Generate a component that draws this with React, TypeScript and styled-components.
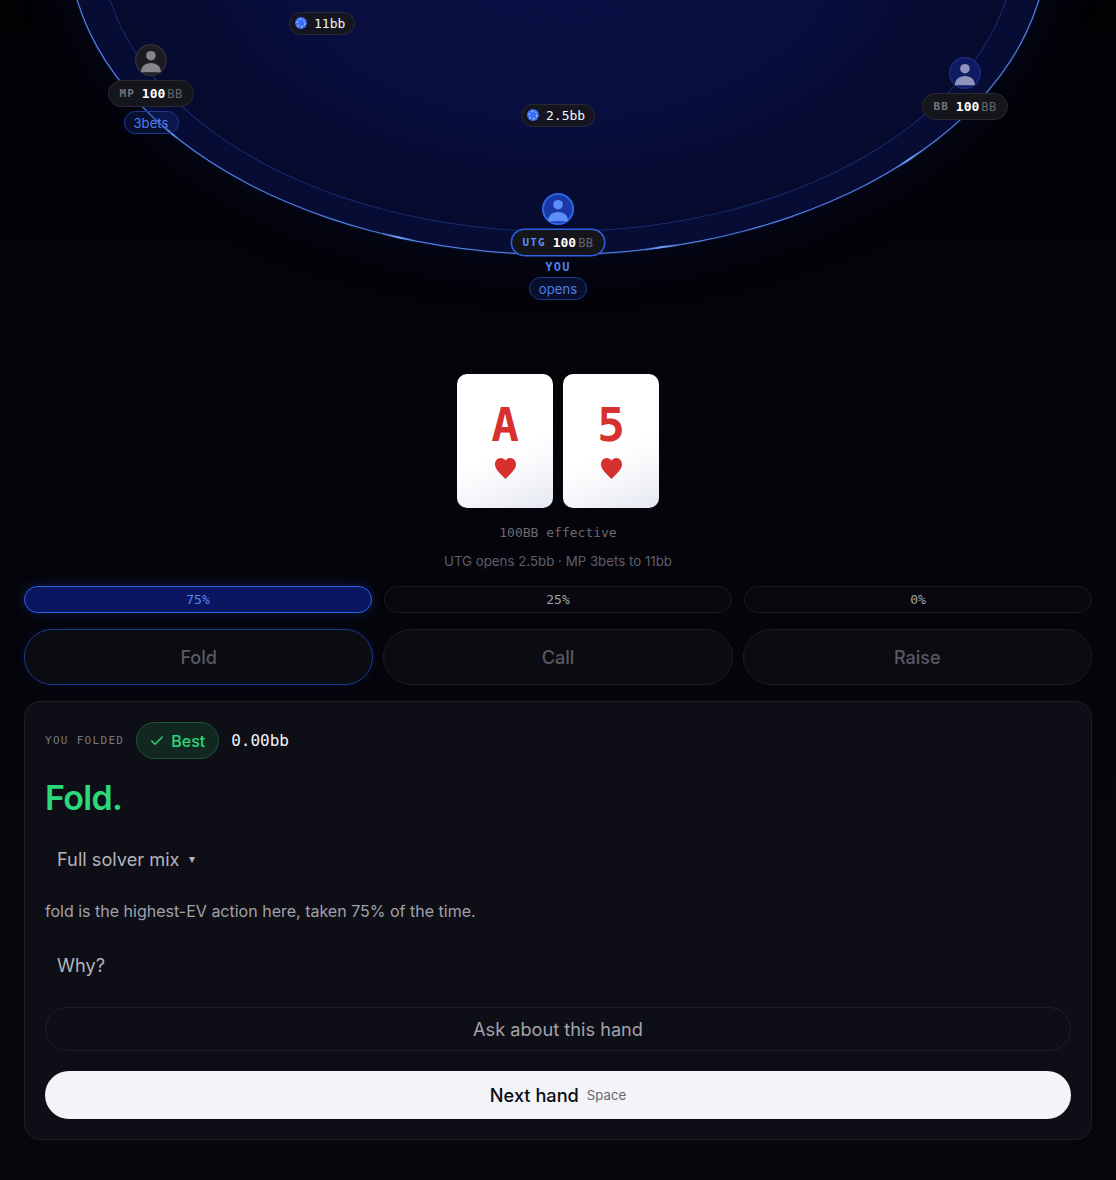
import styled, { createGlobalStyle } from "styled-components";
import { Check } from "lucide-react";

const mono = `"DejaVu Sans Mono", "Liberation Mono", monospace`;

const GlobalStyle = createGlobalStyle`
  html, body {
    margin: 0;
    padding: 0;
    background: #04040a;
    color: #f3f4f8;
    font-family: Inter, "Noto Sans", sans-serif;
  }
  button { font-family: inherit; }
`;

const Page = styled.div`
  height: 1180px;
  overflow: hidden;
  padding: 0 24px;
  box-sizing: border-box;
  background: linear-gradient(180deg, #020205 0%, #04040a 40%, #06060d 100%);
`;

const Stage = styled.div`
  position: relative;
  height: 374px;
  margin: 0 -24px;
  overflow: hidden;
`;

const Felt = styled.div`
  position: absolute;
  left: 68px;
  top: -373px;
  width: 980px;
  height: 628px;
  box-sizing: border-box;
  border-radius: 50%;
  border: 1px solid #5585ee;
  background: #060c34;
  box-shadow: 0 0 1.5px rgba(80, 130, 240, 0.7), 0 0 56px 8px rgba(20, 50, 170, 0.13);
`;

const FeltLine = styled.div`
  position: absolute;
  inset: 22px 31px;
  border-radius: 50%;
  border: 1px solid rgba(50, 90, 200, 0.42);
  background: radial-gradient(ellipse 50% 50% at 50% 50%, #0a1044 0%, #080e3e 60%, #060b30 90%, #060b2e 100%);
`;

const RimGlow = styled.svg`
  position: absolute;
  left: 0;
  top: 0;
  pointer-events: none;
  filter: blur(0.3px);
`;

const Seat = styled.div<{ $x: number; $y: number }>`
  position: absolute;
  left: ${(p) => p.$x}px;
  top: ${(p) => p.$y}px;
  transform: translateX(-50%);
  display: flex;
  flex-direction: column;
  align-items: center;
  gap: 4px;
`;

const Avatar = styled.div<{ $tone: "hero" | "navy" | "dark" }>`
  width: 32px;
  height: 32px;
  border-radius: 50%;
  box-shadow: inset 0 0 0 ${(p) => (p.$tone === "hero" ? "2px #2f63e6" : p.$tone === "navy" ? "1.5px #1c2a78" : "1.5px #2e2e36")};
  background: ${(p) => (p.$tone === "hero" ? "#1a38a6" : p.$tone === "navy" ? "#0f1a62" : "#1b1b21")};
  color: ${(p) => (p.$tone === "hero" ? "#5e8ff8" : p.$tone === "navy" ? "#8f94bb" : "#85858c")};
`;

const StackPill = styled.div<{ $hero?: boolean }>`
  height: 27px;
  box-sizing: border-box;
  padding: 0 10.5px;
  border-radius: 14px;
  display: flex;
  align-items: center;
  white-space: nowrap;
  font-family: ${mono};
  background: #15151c;
  border: 1px solid ${(p) => (p.$hero ? "#2f63e6" : "#2a2a32")};
  box-shadow: ${(p) => (p.$hero ? "0 0 0 0.5px #2f63e6" : "none")};
`;

const SeatName = styled.span<{ $hero?: boolean }>`
  font-size: 11px;
  font-weight: 700;
  letter-spacing: 1.1px;
  margin-right: 7px;
  color: ${(p) => (p.$hero ? "#5b8af0" : "#74747c")};
`;

const StackValue = styled.span`
  font-size: 13px;
  font-weight: 700;
  color: #ffffff;
`;

const StackUnit = styled.span`
  font-size: 12px;
  letter-spacing: 0.4px;
  margin-left: 2px;
  color: #66666e;
`;

const YouLabel = styled.div`
  font-family: ${mono};
  font-size: 12px;
  font-weight: 700;
  letter-spacing: 1.2px;
  line-height: 14px;
  color: #4f7fe8;
`;

const ActionTag = styled.div<{ $tight?: boolean }>`
  height: 23px;
  box-sizing: border-box;
  padding: 0 9px;
  margin-top: ${(p) => (p.$tight ? "-1px" : "0")};
  border-radius: 12px;
  display: flex;
  align-items: center;
  font-size: 13px;
  letter-spacing: 0.1px;
  color: #4f7fe8;
  background: rgba(30, 60, 170, 0.22);
  border: 1px solid #1d3a90;
`;

const BetPill = styled.div<{ $x: number; $y: number }>`
  position: absolute;
  left: ${(p) => p.$x}px;
  top: ${(p) => p.$y}px;
  height: 23px;
  box-sizing: border-box;
  padding: 0 9px 0 5px;
  border-radius: 12px;
  display: flex;
  align-items: center;
  gap: 7px;
  font-family: ${mono};
  font-size: 13px;
  font-weight: 500;
  color: #f3f4f8;
  background: #15151f;
  border: 1px solid #2a2a34;
`;

const Hand = styled.div`
  display: flex;
  justify-content: center;
  gap: 10px;
`;

const Card = styled.div`
  width: 96px;
  height: 134px;
  border-radius: 10px;
  display: flex;
  flex-direction: column;
  align-items: center;
  padding-top: 28px;
  box-sizing: border-box;
  color: #d6302f;
  background: linear-gradient(158deg, #ffffff 55%, #f6f7fa 75%, #e4e8f1 100%);
`;

const Rank = styled.div`
  font-family: ${mono};
  font-size: 46px;
  font-weight: 700;
  line-height: 46px;
`;

const Suit = styled.svg`
  width: 21px;
  height: 21px;
  margin-top: 10px;
`;

const Effective = styled.div`
  margin-top: 17px;
  text-align: center;
  font-family: ${mono};
  font-size: 13px;
  line-height: 16px;
  color: #6b6b73;
`;

const Story = styled.div`
  margin-top: 11px;
  text-align: center;
  font-size: 13.3px;
  line-height: 18px;
  color: #5f5f67;
`;

const FreqRow = styled.div`
  margin-top: 16px;
  display: grid;
  grid-template-columns: repeat(3, 1fr);
  gap: 12px;
`;

const FreqBar = styled.div<{ $best?: boolean }>`
  height: 27px;
  box-sizing: border-box;
  border-radius: 14px;
  display: flex;
  align-items: center;
  justify-content: center;
  font-family: ${mono};
  font-size: 13px;
  border: 1px solid ${(p) => (p.$best ? "#2f63e6" : "#1b1b22")};
  background: ${(p) => (p.$best ? "#0a1660" : "#08080e")};
  color: ${(p) => (p.$best ? "#5585ee" : "#a2a2aa")};
  box-shadow: ${(p) => (p.$best ? "0 0 12px rgba(40, 90, 230, 0.3)" : "none")};
`;

const ActionRow = styled.div`
  margin-top: 16px;
  display: grid;
  grid-template-columns: repeat(3, 1fr);
  gap: 10px;
`;

const ActionButton = styled.button<{ $best?: boolean }>`
  height: 56px;
  border-radius: 28px;
  font-size: 18px;
  font-weight: 500;
  color: #5a5a62;
  background: #0b0b12;
  border: 1px solid ${(p) => (p.$best ? "#1c3a92" : "#1c1c23")};
  box-shadow: ${(p) => (p.$best ? "0 0 10px rgba(30, 70, 200, 0.14)" : "none")};
`;

const Panel = styled.section`
  margin-top: 16px;
  height: 439px;
  box-sizing: border-box;
  padding: 20px;
  border-radius: 16px;
  background: #0e0e16;
  border: 1px solid #1f1f27;
  display: flex;
  flex-direction: column;
`;

const ResultRow = styled.div`
  display: flex;
  align-items: center;
  gap: 12px;
`;

const Eyebrow = styled.span`
  font-family: ${mono};
  font-size: 11px;
  letter-spacing: 1.3px;
  color: #77777f;
`;

const Badge = styled.span`
  height: 37px;
  box-sizing: border-box;
  padding: 0 13px 0 12px;
  border-radius: 19px;
  display: flex;
  align-items: center;
  gap: 6px;
  font-size: 16px;
  font-weight: 500;
  color: #2bd97c;
  background: #12271f;
  border: 1px solid #1d5539;
`;

const EvValue = styled.span`
  font-family: ${mono};
  font-size: 16px;
  color: #f3f4f8;
`;

const Verdict = styled.h2`
  margin: 17px 0 0;
  font-size: 34px;
  line-height: 44px;
  font-weight: 600;
  letter-spacing: -0.7px;
  color: #2bd97c;
`;

const Disclosure = styled.div<{ $gap: number }>`
  margin-top: ${(p) => p.$gap}px;
  padding-left: 12px;
  display: flex;
  align-items: center;
  gap: 9px;
  font-size: 18.2px;
  line-height: 24px;
  color: #b4b4bc;
`;

const Caret = styled.span`
  font-size: 12px;
  color: #b4b4bc;
`;

const Explain = styled.p`
  margin: 28px 0 0;
  font-size: 16px;
  line-height: 24px;
  color: #a2a2aa;
`;

const AskButton = styled.button`
  margin-top: 30px;
  height: 44px;
  border-radius: 22px;
  font-size: 18.2px;
  color: #a2a2aa;
  background: transparent;
  border: 1px solid #1f1f27;
`;

const NextButton = styled.button`
  margin-top: 20px;
  height: 48px;
  border: none;
  border-radius: 24px;
  display: flex;
  align-items: center;
  justify-content: center;
  gap: 8px;
  font-size: 18.2px;
  font-weight: 450;
  color: #0b0b12;
  background: #f3f4f8;
`;

const KeyHint = styled.span`
  font-size: 13.2px;
  font-weight: 400;
  color: #66666e;
`;

const Person = () => (
  <svg width="32" height="32" viewBox="0 0 32 32" fill="currentColor" style={{ display: "block" }}>
    <circle cx="16" cy="11.7" r="4.8" />
    <path d="M6 28.3C6 22.5 10 19 16 19s10 3.5 10 9.3Z" />
  </svg>
);

const Chip = () => (
  <svg width="12" height="12" viewBox="0 0 12 12">
    <circle cx="6" cy="6" r="6" fill="#3a6ff2" />
    <circle cx="6" cy="6" r="3.9" fill="none" stroke="#dbe5ff" strokeWidth="1" strokeDasharray="1.9 2.18" />
  </svg>
);

const Heart = () => (
  <Suit viewBox="2 3 20 18.35" fill="currentColor" preserveAspectRatio="none">
    <path d="M12 21.35l-1.45-1.32C5.4 15.36 2 12.28 2 8.5 2 5.42 4.42 3 7.5 3c1.74 0 3.41.81 4.5 2.09C13.09 3.81 14.76 3 16.5 3 19.58 3 22 5.42 22 8.5c0 3.78-3.4 6.86-8.55 11.54L12 21.35z" />
  </Suit>
);

export default function App() {
  return (
    <Page>
      <GlobalStyle />
      <Stage>
        <Felt>
          <FeltLine />
        </Felt>
        <RimGlow width="1116" height="374" fill="none" stroke="url(#rim)" strokeWidth="2">
          <defs>
            <linearGradient id="rim">
              <stop offset="0" stopColor="#6fa0ff" stopOpacity="0.1" />
              <stop offset="0.5" stopColor="#6fa0ff" />
              <stop offset="1" stopColor="#6fa0ff" stopOpacity="0.1" />
            </linearGradient>
          </defs>
          <path d="M382 233.5 A489.5 313.5 0 0 0 415 240.8" />
          <path d="M645 249.5 A489.5 313.5 0 0 1 678 244.9" />
          <path d="M896 167.8 A489.5 313.5 0 0 0 922 150.6" />
          <path d="M163 126.2 A489.5 313.5 0 0 0 178 138.6" />
        </RimGlow>

        <BetPill $x={289} $y={11.5}>
          <Chip />
          11bb
        </BetPill>
        <BetPill $x={521} $y={103.5}>
          <Chip />
          2.5bb
        </BetPill>

        <Seat $x={151} $y={44}>
          <Avatar $tone="dark">
            <Person />
          </Avatar>
          <StackPill>
            <SeatName>MP</SeatName>
            <StackValue>100</StackValue>
            <StackUnit>BB</StackUnit>
          </StackPill>
          <ActionTag>3bets</ActionTag>
        </Seat>

        <Seat $x={965} $y={57}>
          <Avatar $tone="navy">
            <Person />
          </Avatar>
          <StackPill>
            <SeatName>BB</SeatName>
            <StackValue>100</StackValue>
            <StackUnit>BB</StackUnit>
          </StackPill>
        </Seat>

        <Seat $x={558} $y={193}>
          <Avatar $tone="hero">
            <Person />
          </Avatar>
          <StackPill $hero>
            <SeatName $hero>UTG</SeatName>
            <StackValue>100</StackValue>
            <StackUnit>BB</StackUnit>
          </StackPill>
          <YouLabel>YOU</YouLabel>
          <ActionTag $tight>opens</ActionTag>
        </Seat>
      </Stage>

      <Hand>
        <Card>
          <Rank>A</Rank>
          <Heart />
        </Card>
        <Card>
          <Rank>5</Rank>
          <Heart />
        </Card>
      </Hand>
      <Effective>100BB effective</Effective>
      <Story>UTG opens 2.5bb · MP 3bets to 11bb</Story>

      <FreqRow>
        <FreqBar $best>75%</FreqBar>
        <FreqBar>25%</FreqBar>
        <FreqBar>0%</FreqBar>
      </FreqRow>

      <ActionRow>
        <ActionButton $best>Fold</ActionButton>
        <ActionButton>Call</ActionButton>
        <ActionButton>Raise</ActionButton>
      </ActionRow>

      <Panel>
        <ResultRow>
          <Eyebrow>YOU FOLDED</Eyebrow>
          <Badge>
            <Check size={16} strokeWidth={2} />
            Best
          </Badge>
          <EvValue>0.00bb</EvValue>
        </ResultRow>
        <Verdict>Fold.</Verdict>
        <Disclosure $gap={27}>
          Full solver mix <Caret>▾</Caret>
        </Disclosure>
        <Explain>fold is the highest-EV action here, taken 75% of the time.</Explain>
        <Disclosure $gap={30}>Why?</Disclosure>
        <AskButton>Ask about this hand</AskButton>
        <NextButton>
          Next hand <KeyHint>Space</KeyHint>
        </NextButton>
      </Panel>
    </Page>
  );
}
